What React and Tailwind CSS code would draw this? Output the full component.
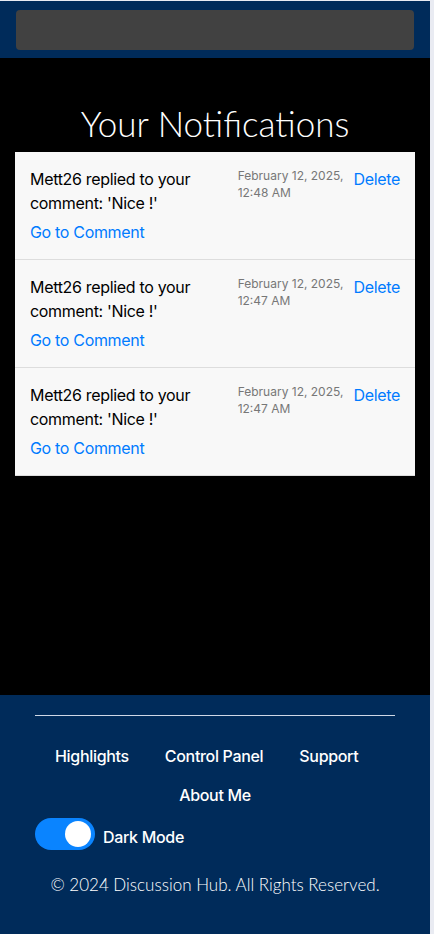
import React from "react";

const items = [
  { date: "February 12, 2025,", time: "12:48 AM" },
  { date: "February 12, 2025,", time: "12:47 AM" },
  { date: "February 12, 2025,", time: "12:47 AM" },
];

export default function App() {
  return (
    <div className="flex w-[434px] min-h-[934px] bg-[#e9ebf2] pt-px">
      <div
        className="flex w-[430px] flex-col tracking-[-0.02em]"
        style={{ fontFamily: "Inter, 'Liberation Sans', sans-serif" }}
      >
        <header className="bg-[#002b5a] px-4 pt-[9px] pb-[8px]">
          <div className="h-10 rounded bg-[#414141]" />
        </header>
        <main className="flex h-[637px] flex-col bg-black px-[15px] pt-[41px]">
          <h1
            className="mb-[5px] text-center text-[35px] font-light leading-[48px] tracking-normal text-white"
            style={{ fontFamily: "Lato, 'Open Sans', sans-serif" }}
          >
            Your Notifications
          </h1>
          <ul className="flex flex-col bg-[#f8f8f8]">
            {items.map((it, i) => (
              <li key={i} className="flex h-[108px] border-b border-[#dddddd] pl-[15px] pr-[15px] pt-[15px]">
                <div className="flex w-[200px] flex-col">
                  <p className="text-[16px] leading-[24px] text-black">
                    Mett26 replied to your comment: 'Nice !'
                  </p>
                  <a className="mt-[5px] text-[16px] leading-[24px] text-[#007bff]">Go to Comment</a>
                </div>
                <div className="ml-auto flex gap-[10px]">
                  <div className="text-[12px] leading-[17px] tracking-normal text-[#777777]">
                    <div>{it.date}</div>
                    <div>{it.time}</div>
                  </div>
                  <a className="text-[16px] leading-[24px] text-[#007bff]">Delete</a>
                </div>
              </li>
            ))}
          </ul>
        </main>
        <footer className="flex flex-1 flex-col bg-[#002b5a] px-[35px] pt-[20px] pb-[30px]">
          <div className="h-px bg-[#cfd8e6]" />
          <nav className="mt-[28px] flex flex-col gap-y-[16px] text-[16px] font-medium leading-[24px] text-white">
            <div className="flex gap-x-[36px] pl-[20px]">
              <a>Highlights</a>
              <a>Control Panel</a>
              <a>Support</a>
            </div>
            <div className="-mt-px flex justify-center">
              <a>About Me</a>
            </div>
          </nav>
          <div className="mt-[11px] flex items-center gap-[8px]">
            <div className="flex h-[32px] w-[60px] items-center justify-end rounded-full bg-[#0a84ff] px-[4px]">
              <div className="h-[26px] w-[26px] rounded-full bg-white" />
            </div>
            <span className="pt-[6px] text-[16px] font-medium text-white">Dark Mode</span>
          </div>
          <p
            className="mt-[22px] text-center text-[17px] font-light tracking-normal text-white"
            style={{ fontFamily: "Lato, 'Open Sans', sans-serif" }}
          >
            © 2024 Discussion Hub. All Rights Reserved.
          </p>
        </footer>
      </div>
    </div>
  );
}
